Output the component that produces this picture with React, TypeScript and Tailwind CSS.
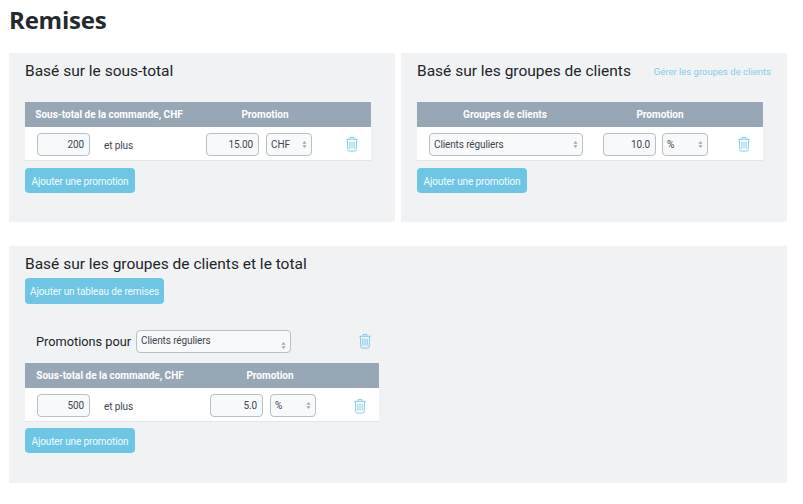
const ff = "font-['Roboto','Open_Sans',sans-serif]"
const small = 'text-[10px] tracking-[-0.12px]'

function Trash({ className = '' }: { className?: string }) {
  return (
    <svg viewBox="0 0 14 17" className={`h-[16px] w-[14px] ${className}`} fill="none" stroke="#7cc8e6" strokeWidth="1">
      <path d="M1 3.5h12" />
      <path d="M5 3.5V1.5h4v2" />
      <path d="M2 3.5l.6 11.2c0 .8.6 1.3 1.3 1.3h6.2c.7 0 1.3-.5 1.3-1.3L12 3.5" />
      <path d="M4.7 6v7.5M7 6v7.5M9.3 6v7.5" />
    </svg>
  )
}

function Num({ value }: { value: string }) {
  return (
    <div className={`flex h-[23px] w-[53px] items-center justify-end rounded-[4px] border border-[#b4c0cc] bg-[#f8f9fa] pr-[5px] ${small} text-[#3c4650]`}>
      {value}
    </div>
  )
}

function Sel({ value, className = '', low = false }: { value: string; className?: string; low?: boolean }) {
  return (
    <div className={`flex h-[23px] items-center justify-between rounded-[4px] border border-[#b4c0cc] bg-[#f8f9fa] pl-[4px] pr-[4px] ${small} text-[#3c4650] ${className}`}>
      <span className={low ? 'self-start pt-[3px] leading-[14px]' : ''}>{value}</span>
      <svg viewBox="0 0 6 9" className={`h-[7px] w-[5px] ${low ? 'mt-[8px]' : ''}`} fill="#9aa6b2">
        <path d="M3 0l2.6 3.4H.4zM3 9L.4 5.6h5.2z" />
      </svg>
    </div>
  )
}

function Btn({ children, className = '' }: { children: string; className?: string }) {
  return (
    <div className={`flex items-center justify-center whitespace-nowrap rounded-[4px] bg-[#6ec6e4] pt-[1px] ${small} text-[#f2fafd] ${className}`}>
      {children}
    </div>
  )
}

function Head({ a, b, cols }: { a: string; b: string; cols: string }) {
  return (
    <div className={`grid h-[25px] items-center bg-[#98a7b5] text-center text-[10px] font-bold text-white ${cols}`}>
      <div>{a}</div>
      <div>{b}</div>
    </div>
  )
}

function TotalRow({ value, amount, unit, label, trash }: { value: string; amount: string; unit: string; label: string; trash: string }) {
  return (
    <div className="flex h-[34px] items-center border-b border-[#e2e6ea] bg-white pl-[12px] pt-[2px]">
      <Num value={value} />
      <span className={`ml-[14px] pt-[2px] ${label} ${small} text-[#3c4650]`}>et plus</span>
      <Num value={amount} />
      <Sel value={unit} className="ml-[7px] w-[46px]" />
      <Trash className={trash} />
    </div>
  )
}

export default function App() {
  return (
    <div className={`h-[504px] w-[803px] overflow-hidden bg-white pl-[9px] pr-[16px] text-[#212529] ${ff}`}>
      <h1 className="h-[53px] pt-[2px] font-['Open_Sans'] text-[24px] leading-[36px] font-bold tracking-[-0.2px] text-[#24292e]">Remises</h1>

      <div className="flex gap-[6px]">
        <section className="h-[169px] w-[386px] bg-[#f1f2f4] pl-[16px] pt-[8px]">
          <h2 className="h-[41px] text-[15.5px] leading-[20px]">Basé sur le sous-total</h2>
          <div className="w-[346px]">
            <Head a="Sous-total de la commande, CHF" b="Promotion" cols="grid-cols-[168px_144px]" />
            <TotalRow value="200" amount="15.00" unit="CHF" label="w-[102px]" trash="ml-[33px] -mt-[2px]" />
          </div>
          <Btn className="mt-[7px] h-[25px] w-[110px]">Ajouter une promotion</Btn>
        </section>

        <section className="h-[169px] w-[386px] bg-[#f1f2f4] pl-[16px] pt-[8px]">
          <div className="flex h-[41px] w-[354px] items-start justify-between">
            <h2 className="text-[15.5px] leading-[20px]">Basé sur les groupes de clients</h2>
            <a className="pt-[4px] text-[9.5px] leading-[14px] text-[#84cde8]">Gérer les groupes de clients</a>
          </div>
          <div className="w-[346px]">
            <Head a="Groupes de clients" b="Promotion" cols="grid-cols-[176px_134px]" />
            <div className="flex h-[34px] items-center border-b border-[#e2e6ea] bg-white pl-[12px] pt-[2px]">
              <Sel value="Clients réguliers" className="w-[154px]" />
              <div className="ml-[20px]">
                <Num value="10.0" />
              </div>
              <Sel value="%" className="ml-[6px] w-[46px]" />
              <Trash className="ml-[29px] -mt-[2px]" />
            </div>
          </div>
          <Btn className="mt-[7px] h-[25px] w-[110px]">Ajouter une promotion</Btn>
        </section>
      </div>

      <section className="mt-[24px] h-[237px] w-[778px] bg-[#f1f2f4] pl-[16px] pt-[8px]">
        <h2 className="h-[24px] text-[15.5px] leading-[20px]">Basé sur les groupes de clients et le total</h2>
        <Btn className="h-[26px] w-[139px]">Ajouter un tableau de remises</Btn>
        <div className="mt-[26px] flex h-[33px] w-[354px] items-start pl-[11px]">
          <span className="w-[100px] flex-none text-[12.75px] leading-[24px]">Promotions pour</span>
          <Sel value="Clients réguliers" low className="w-[155px]" />
          <Trash className="ml-[67px] mt-[3px]" />
        </div>
        <div className="w-[354px]">
          <Head a="Sous-total de la commande, CHF" b="Promotion" cols="grid-cols-[170px_150px]" />
          <TotalRow value="500" amount="5.0" unit="%" label="w-[106px]" trash="ml-[37px]" />
        </div>
        <Btn className="mt-[6px] h-[25px] w-[110px]">Ajouter une promotion</Btn>
      </section>
    </div>
  )
}
